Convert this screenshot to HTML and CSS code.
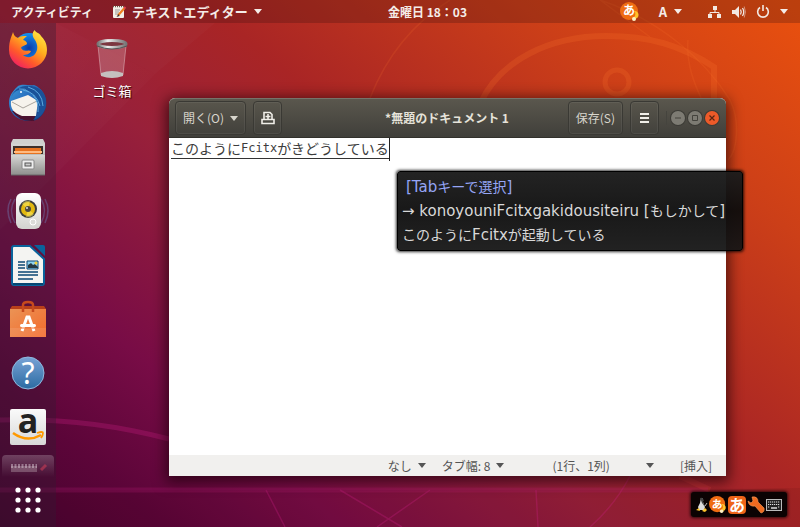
FILE: index.html
```html
<!DOCTYPE html>
<html lang="ja">
<head>
<meta charset="utf-8">
<title>テキストエディター</title>
<link rel="stylesheet" href="styles.css">
</head>
<body>
<svg class="wallpaper" viewBox="0 0 800 527" preserveAspectRatio="none" aria-hidden="true">
  <defs>
    <linearGradient id="ray" x1="0" y1="0" x2="1" y2="1"><stop offset="0" stop-color="#fff" stop-opacity=".04"/><stop offset="1" stop-color="#fff" stop-opacity="0"/></linearGradient>
  </defs>
  <path d="M56 23L155 74L0 230V23z" fill="url(#ray)"/>
  <path d="M155 74L215 23H56z" fill="#fff" opacity=".02"/>
  <path d="M0 490H710L800 488V527H0z" fill="#200" opacity=".08"/>
  <g fill="none" stroke="#ff7a2e">
    <path d="M480 104C500 60 550 36 606 36C650 36 680 45 714 67V110" stroke-width="6" opacity=".2"/>
    <circle cx="617" cy="82" r="12" stroke-width="5" opacity=".2"/>
    <path d="M370 98C385 60 410 25 450 0M600 0C660 20 705 60 730 100C740 120 738 150 728 160M688 40C686 65 695 85 702 100M600 0L650 37" stroke-width="1.5" opacity=".15"/>
  </g>
  <g fill="none" stroke="#d0208a">
    <path d="M0 420C60 418 120 426 169 439" stroke-width="5" opacity=".28"/>
    <path d="M0 490H708" stroke-width="5" opacity=".18"/>
    <path d="M680 476L710 490" stroke="#e04040" stroke-width="6" opacity=".25"/>
    <path d="M266 490L285 527M340 490L402 527M430 490L377 527M536 490L538 527M630 476Q615 505 590 527" stroke-width="1.5" opacity=".28"/>
  </g>
</svg>

<header class="topbar">
  <nav class="topbar-side">
    <button class="activities" type="button">アクティビティ</button>
    <button class="appmenu" type="button">
      <svg width="14" height="14" viewBox="0 0 14 14" aria-hidden="true"><rect x="1" y="1" width="11" height="12" rx="1" fill="#f3f1e8"/><path d="M1 1.500h11" stroke="#6a5a4a" stroke-width="1.500" stroke-dasharray="1 1"/><path d="M3 5h5M3 7h4M3 9h3" stroke="#999"/><path d="M12.500 3L6 10.500" stroke="#f08020" stroke-width="2.200"/><path d="M12 2l1.500 1.500" stroke="#e04050" stroke-width="2"/><path d="M6.500 9L4.500 12L7.500 11z" fill="#333"/></svg>
      <span>テキストエディター</span><i class="caret"></i>
    </button>
  </nav>
  <time class="clock">金曜日 18：03</time>
  <div class="topbar-side tray">
    <button type="button" aria-label="入力メソッド"><svg width="20" height="20" viewBox="0 0 20 20"><circle cx="9" cy="9" r="9" fill="#ef6c12"/><path d="M14 9a4 4 0 1 1-2 7a4 4 0 0 0 2-7" fill="#ffc32a"/><circle cx="14" cy="17" r="2" fill="#fff2c4"/><text x="3" y="13" class="kana" font-size="12">あ</text></svg></button>
    <button class="layout" type="button">A<i class="caret"></i></button>
    <button class="system" type="button" aria-label="システム">
      <svg width="14" height="14" viewBox="0 0 14 14"><path d="M5 1h4v4H5zM0 9h4v4H0zM9 9h4v4H9z" fill="#f2e8e2"/><path d="M7 5v2.500M2 9V7.500h9V9" fill="none" stroke="#f2e8e2"/></svg>
      <svg width="14" height="14" viewBox="0 0 14 14"><path d="M0 5h3l4-4v12L3 9H0z" fill="#f2e8e2"/><path d="M8.500 4.500q1.500 2.500 0 5M10.500 3q2.500 4 0 8" fill="none" stroke="#f2e8e2" stroke-width="1.300"/><path d="M12.200 1.500q2.500 5.500 0 11" fill="none" stroke="#f2e8e2" opacity=".5"/></svg>
      <svg width="14" height="14" viewBox="0 0 14 14"><path d="M4 2.500a5.300 5.300 0 1 0 6 0M7 0v6" fill="none" stroke="#f2e8e2" stroke-width="1.600"/></svg>
      <i class="caret"></i>
    </button>
  </div>
</header>

<main class="desktop">
  <nav class="dock" aria-label="ドック">
    <button type="button" aria-label="Firefox"><svg width="38" height="40" viewBox="0 0 38 40">
      <defs><linearGradient id="ff" x1=".9" y1="0" x2=".2" y2="1"><stop offset="0" stop-color="#fff04a"/><stop offset=".4" stop-color="#ffb01e"/><stop offset=".7" stop-color="#ff5a2a"/><stop offset="1" stop-color="#f0186a"/></linearGradient><radialGradient id="fb"><stop offset="0" stop-color="#0a3aa8"/><stop offset="1" stop-color="#1493f0"/></radialGradient></defs>
      <circle cx="20" cy="19" r="15" fill="url(#fb)"/>
      <path d="M4 3C3 7 0 11 0 21A19 18.500 0 0 0 38 21C38 14 35 10 32 7C31 4 27 4 25.500 1C23 4 23 7 26 11C29 16 29 21 26 25C23 29 17 29 14 26C17 26 21 25 22 22C19 20 15 24 12 19C13 16 18 17 18 14C17 12 15 11 14 11C15 9 17 8 18 7C14 7 11 7 9 9C7 8 5 7 4 3z" fill="url(#ff)"/></svg></button>
    <button type="button" aria-label="Thunderbird"><svg width="38" height="38" viewBox="0 0 38 38">
      <defs><linearGradient id="tb" x1="0" y1="0" x2="1" y2="1"><stop offset="0" stop-color="#3e9ad8"/><stop offset=".5" stop-color="#2265b8"/><stop offset="1" stop-color="#0b2a66"/></linearGradient></defs>
      <path d="M8 3C12-1 20 2 25 1C33 4 38 12 37 21C36 31 28 38 20 37C10 37 0 30 0 19C0 12 3 8 8 3z" fill="url(#tb)"/>
      <path d="M3 27Q10 38 25 37L27 28z" fill="#4a1230"/>
      <path d="M2 17L19 11L29 17L27 32L13 32C5 29 1 25 2 17z" fill="#f6f3ec"/><path d="M3 18L14 24L28 17" fill="none" stroke="#a9a49c"/>
      <path d="M2 15C4 3 19 3 25 13C32 21 30 31 24 36C37 33 42 16 32 6C22-2 4 1 2 15z" fill="#1a5299"/><path d="M14 6Q27 8 31 22M19 3Q33 7 34 22M24 11Q30 18 29 28M10 5Q16 4 20 8" fill="none" stroke="#5ca9df"/><circle cx="12" cy="8" r="1" fill="#fff"/></svg></button>
    <button type="button" aria-label="ファイル"><svg width="38" height="38" viewBox="0 0 38 38">
      <defs><linearGradient id="fg" x2="0" y2="1"><stop offset="0" stop-color="#d6d6d4"/><stop offset="1" stop-color="#929290"/></linearGradient></defs>
      <path d="M4 1H34L36 5V37H2V5z" fill="#d0d0ce"/><path d="M2 6H36V37H2z" fill="url(#fg)"/><path d="M4 8H34V16H4z" fill="#3c2f2a"/><path d="M6 10H32V16H6z" fill="#e77320"/><path d="M5 14H33" stroke="#ffba80" stroke-width="2"/><path d="M2 17H36V36H2z" fill="url(#fg)"/><path d="M2 37H36" stroke="#666"/><rect x="13" y="22" width="12" height="9" rx="1" fill="#eee" stroke="#888"/><rect x="16" y="25" width="6" height="3" fill="#ccc" stroke="#555"/></svg></button>
    <button type="button" aria-label="Rhythmbox"><svg width="42" height="38" viewBox="0 0 42 38">
      <g fill="none" stroke="#7083bc" opacity=".4"><path d="M4 7Q-2 18 4 31M8 7Q1 18 8 31M38 7Q44 18 38 31M34 7Q41 18 34 31" stroke-width="1.500"/></g>
      <defs><linearGradient id="rb" x2="0" y2="1"><stop offset="0" stop-color="#fff"/><stop offset="1" stop-color="#d2d2cf"/></linearGradient></defs>
      <rect x="9" y="1" width="25" height="36" rx="6" fill="url(#rb)"/><circle cx="21" cy="17" r="9" fill="#3b3d3c"/><circle cx="21" cy="17" r="7" fill="#e1b810"/><path d="M21 17L15 12A8 8 0 0 1 23 9zM21 17L27 22A8 8 0 0 1 19 25z" fill="#fff06a" opacity=".5"/><circle cx="21" cy="17" r="3" fill="#4b4840"/><circle cx="20" cy="16" r="1" fill="#ddd"/><circle cx="26" cy="30" r="3" fill="#dcdcd9" stroke="#fff"/></svg></button>
    <button type="button" aria-label="LibreOffice Writer"><svg width="34" height="41" viewBox="0 0 34 41">
      <path d="M3 1H19L33 14V38Q33 40 31 40H3Q1 40 1 38V3Q1 1 3 1z" fill="#f4f4f2" stroke="#0a639c" stroke-width="2"/><path d="M23 0H32Q34 0 34 2V11z" fill="#0a639c"/><path d="M2 39H32" stroke="#064672" stroke-width="2"/>
      <path d="M7 17h7M7 20h7M7 23h7M7 27h20M7 30h20M7 34h15" stroke="#0b4774" stroke-width="1.600"/><path d="M16 16h11v8H16z" fill="#8bd2f0" stroke="#0b4774"/><path d="M17 23v-3l3-2l2 2l2-1l3 3v1z" fill="#243842"/><circle cx="25" cy="18" r="1.500" fill="#f3cf36"/></svg></button>
    <button type="button" aria-label="Ubuntuソフトウェア"><svg width="36" height="38" viewBox="0 0 36 38">
      <defs><linearGradient id="sw" x2="1" y2="1"><stop offset="0" stop-color="#eb9355"/><stop offset="1" stop-color="#f36a2c"/></linearGradient></defs>
      <path d="M2 6H34L36 9H0z" fill="#b9401a"/><path d="M0 9H36V37H0z" fill="url(#sw)"/><path d="M0 28H36V37H0z" fill="#fff" opacity=".1"/><path d="M13 12V5Q13 2 18 2T23 5V12" fill="none" stroke="#c74a1d" stroke-width="2.500"/><path d="M12 31L17 17H19L24 31" fill="none" stroke="#fff" stroke-width="3"/><rect x="10" y="24" width="16" height="3" rx="1.500" fill="#fff"/><path d="M11 28H25" stroke="#ef7536"/></svg></button>
    <button type="button" aria-label="ヘルプ"><svg width="34" height="34" viewBox="0 0 34 34">
      <defs><linearGradient id="hp" x2="0" y2="1"><stop offset="0" stop-color="#78a3d6"/><stop offset="1" stop-color="#2c6ba2"/></linearGradient></defs>
      <circle cx="17" cy="17" r="16" fill="url(#hp)" stroke="#8fb9df"/><text x="17" y="28" text-anchor="middle" class="question">?</text></svg></button>
    <button type="button" aria-label="Amazon"><svg width="36" height="36" viewBox="0 0 36 36">
      <defs><linearGradient id="az" x2="0" y2="1"><stop offset="0" stop-color="#fafafa"/><stop offset="1" stop-color="#d8d8d8"/></linearGradient></defs>
      <rect width="36" height="36" rx="2" fill="url(#az)"/><text x="18" y="24" text-anchor="middle" class="amazon">a</text><path d="M3 24Q17 34 31 26" fill="none" stroke="#ff9900" stroke-width="2.500"/><path d="M27 24Q33 22 33 24T31 29" fill="none" stroke="#ff9900" stroke-width="1.800"/></svg></button>
    <button class="running" type="button" aria-label="テキストエディター"><svg width="38" height="10" viewBox="0 0 38 10"><path d="M2 10V4H28V10" fill="#b8a0ad" opacity=".4"/><path d="M2 4H28" stroke="#e4d5df" stroke-width="4" stroke-dasharray="2 1.500" opacity=".45"/><path d="M32 8L37 3" stroke="#c83c55" stroke-width="3" opacity=".6"/></svg></button>
    <button class="apps" type="button" aria-label="アプリケーションを表示する"><svg width="28" height="28" viewBox="0 0 28 28" fill="#fff"><circle cx="4" cy="4" r="2.600"/><circle cx="14" cy="4" r="2.600"/><circle cx="24" cy="4" r="2.600"/><circle cx="4" cy="14" r="2.600"/><circle cx="14" cy="14" r="2.600"/><circle cx="24" cy="14" r="2.600"/><circle cx="4" cy="24" r="2.600"/><circle cx="14" cy="24" r="2.600"/><circle cx="24" cy="24" r="2.600"/></svg></button>
  </nav>

  <section class="workspace">
    <a class="trash" href="#trash">
      <svg width="34" height="40" viewBox="0 0 34 40" aria-hidden="true"><defs><linearGradient id="rim"><stop offset="0" stop-color="#777"/><stop offset=".35" stop-color="#eee"/><stop offset=".7" stop-color="#aaa"/><stop offset="1" stop-color="#777"/></linearGradient></defs>
      <path d="M3 6L6 36Q17 41 28 36L31 6z" fill="#fff" opacity=".2"/><path d="M3 7L6 36M31 7L28 36" stroke="#fff" opacity=".35"/><path d="M6 34Q17 30 28 34V37Q17 41 6 37z" fill="#c5c0bf"/><ellipse cx="17" cy="5" rx="14" ry="3.500" fill="#7c3740" stroke="url(#rim)" stroke-width="3"/><path d="M2 7Q17 13 32 7" stroke="#555" fill="none"/></svg>
      <span>ゴミ箱</span>
    </a>

    <article class="window">
      <header class="titlebar">
        <div class="actions">
          <button class="tool" type="button">開く(O)<i class="caret"></i></button>
          <button class="tool square" type="button" aria-label="新しいタブ"><svg width="14" height="14" viewBox="0 0 14 14" fill="none" stroke="#f0eee8" stroke-width="1.600"><path d="M3 8V1.500H9L11 3.500V8M1 8.500H13V12.500H1zM7 3V8M4.500 5.500H9.500"/></svg></button>
        </div>
        <h1>*無題のドキュメント 1</h1>
        <div class="actions end">
          <button class="tool" type="button">保存(S)</button>
          <button class="tool square" type="button" aria-label="メニュー"><svg width="9" height="10" viewBox="0 0 9 10"><path d="M0 1H9M0 5H9M0 9H9" stroke="#f0eee8" stroke-width="2"/></svg></button>
          <div class="controls">
            <button type="button" aria-label="最小化"><svg width="14" height="14" viewBox="0 0 14 14"><path d="M4 7H10" stroke="#44433d"/></svg></button>
            <button type="button" aria-label="最大化"><svg width="14" height="14" viewBox="0 0 14 14"><path d="M4.500 4.500H9.500V9.500H4.500z" fill="none" stroke="#44433d"/></svg></button>
            <button class="close" type="button" aria-label="閉じる"><svg width="14" height="14" viewBox="0 0 14 14"><path d="M4.500 4.500L9.500 9.500M9.500 4.500L4.500 9.500" stroke="#5a2512" stroke-width="1.200"/></svg></button>
          </div>
        </div>
      </header>
      <div class="editor">
        <textarea aria-label="本文" spellcheck="false"></textarea>
        <p class="preedit"><span>このように</span><span class="latin">Fcitx</span><span>がきどうしている</span></p>
      </div>
      <footer class="statusbar">
        <button type="button">なし<i class="caret"></i></button>
        <button type="button">タブ幅: 8<i class="caret"></i></button>
        <button class="position" type="button">(1行、1列)<i class="caret"></i></button>
        <span>[挿入]</span>
      </footer>
    </article>

    <div class="candidates">
      <p class="hint"><span class="roman">[Tab</span>キーで選択<span class="roman">]</span></p>
      <ul>
        <li><span class="roman">→ konoyouniFcitxgakidousiteiru [</span>もしかして<span class="roman">]</span></li>
        <li>このように<span class="roman">Fcitx</span>が起動している</li>
      </ul>
    </div>

    <div class="imebar">
      <svg width="12" height="16" viewBox="0 0 12 16" aria-hidden="true"><path d="M5 1Q8 1 7 5L9 10L8 13H3L2 10L4 6z" fill="#ddd"/><path d="M4 1q4-1 3 4l2 5-3-4z" fill="#444"/><path d="M0 13L3 11L4 14zM6 14L9 11L11 13L9 15z" fill="#ffc62b"/><path d="M9 9L11 6" stroke="#bbb"/></svg>
      <button type="button" aria-label="Mozc"><svg width="18" height="18" viewBox="0 0 20 20"><circle cx="9" cy="9" r="9" fill="#ef6c12"/><path d="M14 9a4 4 0 1 1-2 7a4 4 0 0 0 2-7" fill="#ffc32a"/><circle cx="14" cy="17" r="2" fill="#fff2c4"/><text x="3" y="13" class="kana" font-size="12">あ</text></svg></button>
      <button type="button" aria-label="ひらがな"><svg width="18" height="18" viewBox="0 0 18 18"><rect width="18" height="18" rx="4" fill="#ee6418"/><text x="1" y="15" class="kana" font-size="16">あ</text></svg></button>
      <button type="button" aria-label="ツール"><svg width="18" height="18" viewBox="0 0 18 18"><path d="M1 5L4 7L6 5L5 1Q11 0 11 6L17 12Q18 16 14 17L8 10Q2 11 1 5z" fill="#ef6b20" stroke="#f9a05b" stroke-width=".6"/></svg></button>
      <button type="button" aria-label="仮想キーボード"><svg width="16" height="12" viewBox="0 0 16 12"><rect x=".5" y=".5" width="15" height="11" fill="#222" stroke="#bbb"/><path d="M2 3H14M2 5.500H14M2 8H4M12 8H14" stroke="#ddd" stroke-width="1.200" stroke-dasharray="1.200 .8"/><path d="M5 9H11" stroke="#ddd" stroke-width="1.500"/></svg></button>
    </div>
  </section>
</main>
</body>
</html>
```
FILE: styles.css
```css
* { box-sizing: border-box; }

body {
  margin: 0;
  min-height: 100vh;
  display: flex;
  flex-direction: column;
  font: 13px/20px "Noto Sans CJK JP", sans-serif;
  color: #f4ece8;
  background: linear-gradient(40deg, #45032e 0%, #5c0539 12%, #780c46 24%, #98203a 43%, #a92525 58%, #cc3f18 80%, #ea510e 100%);
  overflow: hidden;
}

button {
  font: inherit;
  color: inherit;
  background: none;
  border: 0;
  padding: 0;
  display: flex;
  align-items: center;
  justify-content: center;
}

svg { display: block; flex: none; overflow: visible; }
p, h1, ul { margin: 0; padding: 0; list-style: none; }

.wallpaper {
  position: absolute;
  inset: 0;
  width: 100%;
  height: 100%;
  z-index: -1;
}

.caret {
  border: 4px solid transparent;
  border-top: 5px solid currentColor;
  border-bottom: 0;
}

.kana { font-family: "Noto Sans CJK JP", sans-serif; font-weight: 700; fill: #fff; }

.topbar {
  height: 23px;
  display: flex;
  align-items: center;
  padding: 0 12px 0 11px;
  font-weight: 700;
  background: rgba(50, 10, 10, 0.25);
}
.topbar-side { flex: 1; display: flex; align-items: center; }
.activities { font-size: 12px; }
.appmenu { gap: 6px; margin-left: 19px; }
.clock { font-size: 12px; margin-left: 56px; }
.tray { justify-content: flex-end; }
.layout { gap: 7px; margin: 0 26px 0 19px; }
.system { gap: 10px; }

.desktop { flex: 1; display: flex; }

.dock {
  width: 56px;
  display: flex;
  flex-direction: column;
  align-items: center;
  background: rgba(50, 28, 50, 0.36);
}
.dock button { width: 52px; height: 54px; padding-bottom: 2px; }
.dock .running {
  height: 22px;
  padding-top: 4px;
  border-radius: 4px 4px 0 0;
  background: linear-gradient(rgba(255, 255, 255, 0.22), rgba(255, 255, 255, 0));
}
.dock .apps { height: 48px; }
.question { font: 30px "Noto Sans", sans-serif; fill: #fff; }
.amazon { font: 700 34px "Open Sans", sans-serif; fill: #222; }

.workspace { position: relative; flex: 1; }

.trash {
  position: absolute;
  left: 32px;
  top: 16px;
  width: 48px;
  display: flex;
  flex-direction: column;
  align-items: center;
  gap: 2px;
  color: #fff;
  text-decoration: none;
  text-shadow: 1px 1px 1px #300;
}

.window {
  position: absolute;
  left: 113px;
  top: 75px;
  right: 74px;
  bottom: 51px;
  display: flex;
  flex-direction: column;
  border-radius: 6px 6px 0 0;
  background: #fff;
  color: #444;
  box-shadow: 0 3px 14px 3px rgba(20, 0, 5, 0.65);
}

.titlebar {
  height: 40px;
  display: flex;
  align-items: center;
  padding: 0 7px 0 6px;
  border-radius: 6px 6px 0 0;
  border-top: 1px solid #77736a;
  border-bottom: 1px solid #32312c;
  background: linear-gradient(#5a574d, #403f3a);
  color: #d8d5cc;
}
.titlebar h1 { font-size: 12px; line-height: 20px; color: #e6e3da; }
.actions { flex: 1; display: flex; align-items: center; gap: 7px; }
.actions.end { justify-content: flex-end; }
.tool {
  height: 34px;
  padding: 0 7px;
  gap: 6px;
  font-size: 12px;
  border: 1px solid #3a3934;
  border-radius: 4px;
  box-shadow: inset 0 0 0 1px rgba(255, 255, 255, 0.06);
}
.square { width: 29px; }
.controls {
  display: flex;
  gap: 3px;
  padding-left: 4px;
  border-left: 1px solid #45443e;
}
.controls button {
  border-radius: 50%;
  background: #7d7b73;
  box-shadow: 0 0 0 1px #3c3b36;
}
.controls .close { background: #ed5a29; }

.editor { position: relative; flex: 1; display: flex; }
.editor textarea {
  flex: 1;
  border: 0;
  padding: 2px;
  resize: none;
  outline: 0;
  background: #fff;
}
.preedit {
  position: absolute;
  left: 2px;
  top: 0;
  display: flex;
  align-items: flex-end;
  font-size: 14px;
  line-height: 20px;
  padding-bottom: 2px;
  border-right: 1px solid #222;
  color: #3c3c3c;
}
.preedit span { border-bottom: 1px solid #333; }
.preedit .latin { font: 12px/20px "DejaVu Sans Mono", monospace; }

.statusbar {
  height: 21px;
  display: flex;
  align-items: center;
  justify-content: flex-end;
  gap: 16px;
  padding: 0 14px;
  font-size: 12px;
  color: #555;
  background: #f1f0ee;
}
.statusbar button { gap: 6px; }
.statusbar .position { gap: 36px; margin: 0 10px 0 32px; }

.candidates {
  position: absolute;
  left: 341px;
  top: 148px;
  right: 57px;
  padding: 3px 4px;
  font: 14px/24px "DejaVu Sans", "Noto Sans CJK JP", sans-serif;
  color: #d8d8d8;
  white-space: nowrap;
  border: 1px solid #000;
  border-radius: 3px;
  background: linear-gradient(rgba(28, 28, 28, 0.97), rgba(12, 12, 12, 0.95) 50%, rgba(22, 22, 22, 0.95));
  box-shadow: 0 0 3px 1px rgba(0, 0, 0, 0.8);
}
.candidates p, .candidates li { height: 24px; }
.candidates .hint { padding-left: 4px; color: #95a5f5; }
.roman { font-size: 15px; }

.imebar {
  position: absolute;
  right: 13px;
  bottom: 10px;
  height: 25px;
  display: flex;
  align-items: center;
  gap: 1px;
  padding: 0 5px;
  border-radius: 3px;
  background: #0b0303;
  box-shadow: 0 0 3px 1px rgba(0, 0, 0, 0.7);
}
```
